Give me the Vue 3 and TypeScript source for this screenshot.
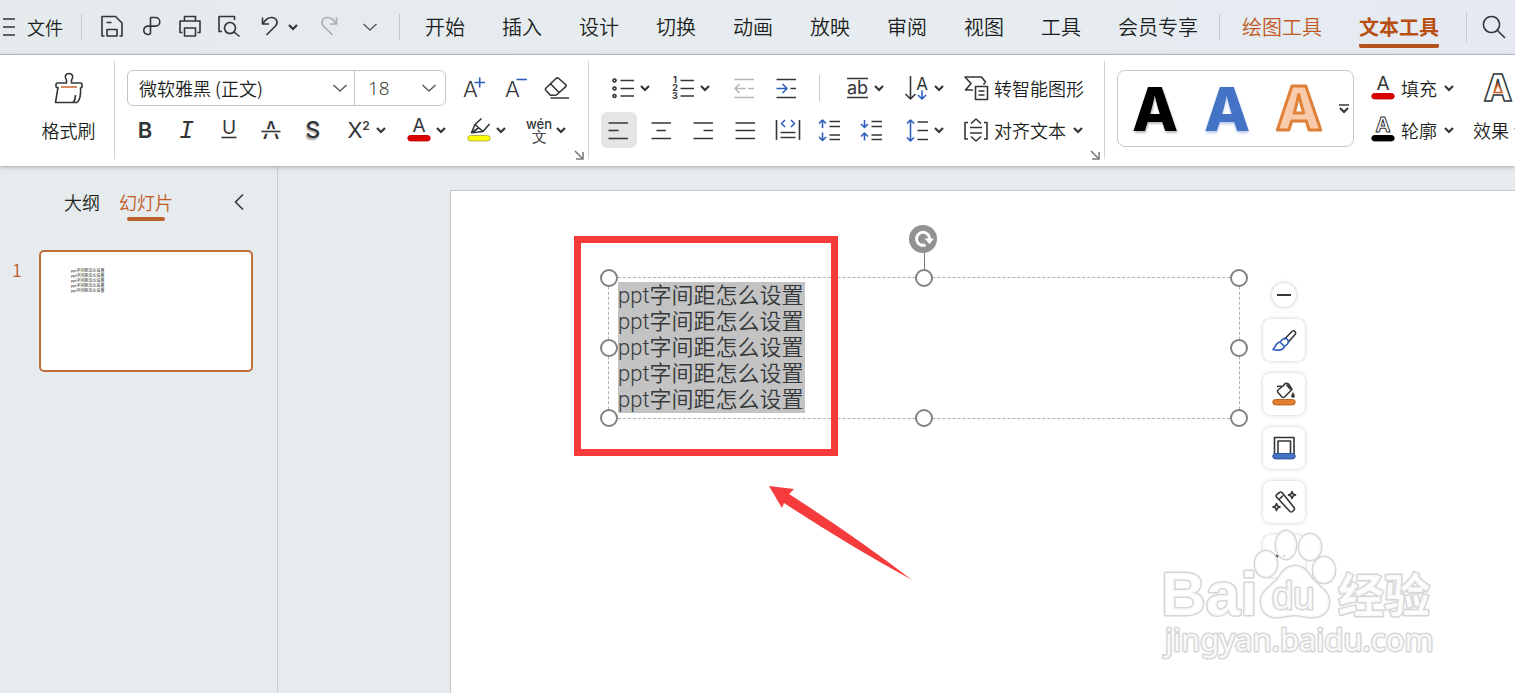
<script setup lang="ts">
import { h, ref, type FunctionalComponent } from 'vue'

interface Part {
  d?: string
  c?: string
  fill?: string
  w?: number
  t?: string
  x?: number
  y?: number
  s?: number
  weight?: number
  italic?: boolean
  font?: string
}

const INK = '#333638'
const BLUE = '#2f5fbd'
const SANS = 'Inter, "Open Sans", sans-serif'
const A_BAR = 'M5.5 19.5h17a2.7 2.7 0 0 1 0 5.4h-17a2.7 2.7 0 0 1 0-5.4z'

const icons: Record<string, Part[]> = {
  save: [{ d: 'M6.500 23H4V3.500H17.500L24 10V23H21.500M9 23V16.500H19V23ZM8.500 9.500H13.500' }],
  link: [{ d: 'M13.500 15V4.500H18.500a4.300 4.300 0 0 1 0 8.600H11a4.200 4.200 0 1 0 2.500 7.500V15' }],
  print: [{ d: 'M8.500 8V3.500H19.500V8M6.500 19.500H4V8H24V19.500H21.500M8.500 15H19.500V23H8.500Z' }],
  preview: [{ d: 'M7 18.500H4V3.500H19.500V7M15 9.500a5.500 5.500 0 1 0 .01 0zM19 19L24.500 23.500' }],
  undo: [{ d: 'M8.500 4.500V11H15M9 10.500C11.500 6.500 14 4.500 17.500 4.500c5.500 0 7 5.500 4 8.500L12.500 22' }],
  redo: [{ d: 'M19.500 4.500V11H13M19 10.500C16.500 6.500 14 4.500 10.500 4.500c-5.500 0-7 5.500-4 8.500L15.500 22', c: '#a9adb0' }],
  search: [{ d: 'M11.500 3.500a8 8 0 1 0 .01 0zM17.500 17.500L25 25' }],
  grow: [{ t: 'A', x: 10.5, y: 22.5, s: 22, weight: 300 }, { d: 'M14.500 8.500H25M19.700 3.500V13.500', c: BLUE }],
  shrink: [{ t: 'A', x: 10.5, y: 22.5, s: 22, weight: 300 }, { d: 'M14.500 5.500H25', c: BLUE }],
  eraser: [{ d: 'M2 14L12 4.500a2 2 0 0 1 2.800 0L21.500 10.500a1.500 1.500 0 0 1 0 2.400L13 20.500a3 3 0 0 1-2 .8H6.500L2 16.500a1.700 1.700 0 0 1 0-2.500zM6.500 9.800L15 18.500M6.500 24H25' }],
  bold: [{ t: 'B', x: 14, y: 21.5, s: 22, weight: 600 }],
  italic: [{ t: 'I', x: 13.5, y: 21.5, s: 25, italic: true, font: '"Liberation Mono", monospace' }],
  underline: [{ t: 'U', x: 14, y: 18, s: 19 }, { d: 'M6.500 21.500H21.500' }],
  strike: [{ t: 'Λ', x: 14, y: 22.5, s: 24 }, { d: 'M4 15.500H24', c: '#fff', w: 4.5 }, { d: 'M4.500 15.500H23.500' }],
  shadow: [{ t: 'S', x: 13, y: 24, s: 24, weight: 500, c: '#bcbcbc' }, { t: 'S', x: 14, y: 22, s: 23, weight: 500 }],
  script: [{ t: 'X', x: 10, y: 22, s: 22 }, { t: '2', x: 21, y: 14, s: 12, weight: 600 }],
  fontColor: [{ t: 'A', x: 14, y: 16, s: 19 }, { d: A_BAR, fill: '#dd0000', c: '#c80000', w: 1 }],
  highlight: [
    { d: 'M16.500 2.500L10 8.500L6.500 16.800L18 15.500L24.500 8M6.500 16.800L14 11.500M10 8.500L18 15.500' },
    { d: A_BAR, fill: '#ffff00', c: '#b5b548', w: 1 },
  ],
  pinyin: [{ t: 'wén', x: 14, y: 13, s: 13, weight: 500 }, { t: '文', x: 14, y: 26, s: 15, weight: 500 }],
  bullets: [{ d: 'M11.500 6.500H25M11.500 14.500H25M11.500 22H25' }, { d: 'M5.500 5a1.500 1.500 0 1 0 .01 0zM5.500 13a1.500 1.500 0 1 0 .01 0zM5.500 20.500a1.500 1.500 0 1 0 .01 0z' }],
  numbers: [
    { d: 'M11.500 6.500H25M11.500 14.500H25M11.500 22H25' },
    { t: '1', x: 6, y: 9, s: 9, weight: 700 }, { t: '2', x: 6, y: 17, s: 9, weight: 700 }, { t: '3', x: 6, y: 25, s: 9, weight: 700 },
  ],
  outdent: [{ d: 'M4.500 5.500H24M4.500 23.500H24M18 14.500H24M5 14.500H15.500M9.500 10L5 14.500L9.500 19', c: '#b4b6b8' }],
  indent: [{ d: 'M4.500 5.500H24M4.500 23.500H24M18.500 14.500H24' }, { d: 'M4.500 14.500H15M10.500 10L15 14.500L10.500 19', c: BLUE }],
  left: [{ d: 'M3.500 7H23M3.500 14.500H13.500M3.500 22.500H23' }],
  center: [{ d: 'M4.500 7H24M9.500 14.500H19M4.500 22.500H24' }],
  right: [{ d: 'M4.500 7H24M14.500 14.500H24M4.500 22.500H24' }],
  justify: [{ d: 'M4.500 7H24M4.500 14.500H24M4.500 22.500H24' }],
  spread: [{ d: 'M3.500 4V24M26.500 4V24M7.500 16.500H22.500M7.500 21.500H22.500' }, { d: 'M12 4L8.500 7.500L12 11M18 4L21.500 7.500L18 11', c: BLUE }],
  paraUp: [{ d: 'M14.500 5.500H25M14.500 10.500H25M14.500 19H25M14.500 23.500H25' }, { d: 'M7.500 12V4M4 7.500L7.500 4L11 7.500M7.500 16.500V24.500M4 21L7.500 24.500L11 21', c: BLUE }],
  paraDown: [{ d: 'M14.500 5.500H25M14.500 10.500H25M14.500 19H25M14.500 23.500H25' }, { d: 'M7.500 4V11.500M4 8L7.500 11.500L11 8M7.500 24.500V17M4 20.500L7.500 17L11 20.500', c: BLUE }],
  lineGap: [{ d: 'M14.500 6H25M14.500 14.500H25M14.500 23.500H25' }, { d: 'M7.500 4V25M4 7.500L7.500 4L11 7.500M4 21.500L7.500 25L11 21.500', c: BLUE }],
  ab: [{ t: 'ab', x: 14.5, y: 19.5, s: 18 }, { d: 'M4 4.500H25M4 23.500H25' }],
  sort: [{ d: 'M7.500 2V25M2.500 20L7.500 25L12.500 20' }, { t: 'A', x: 19, y: 15.500, s: 17 }, { d: 'M19 16.500V25M15 21L19 25L23 21', c: BLUE }],
  smart: [{ d: 'M11 16H3.500L9 9.500L3 3H19.500L23.500 8L21.500 10.500M13.500 12.500H25.500V25.500H13.500ZM16.500 17H22.500M16.500 21H22.500' }],
  alignText: [{ d: 'M6 6.500H3V23H6M22 6.500H25V23H22M9 7.500L14 3L19 7.500M8 11.500H20M8 17H20M9 20.500L14 25L19 20.500' }],
  brush: [
    { d: 'M14 13.500L22 5.500a2 2 0 0 1 3 3L18 16.500' },
    { d: 'M12.500 13.500a2.800 2.800 0 0 1 5 4.500l-3 2.500-4.500-4.500zM10 16C5 17 6 21 3 23.500c5 1 10.500.5 11.500-3', c: BLUE },
  ],
  bucket: [
    { d: 'M7 6.500L13.500 6a3 3 0 0 1 5-2L22 9.500 14.500 17a2 2 0 0 1-2.500 0L8 12.500a2 2 0 0 1 0-2.500l5-4M20.500 9.500l-4-5' },
    { d: 'M23 12.500c2 3 2 5 0 5s-2-2 0-5z', fill: INK, w: 0.5 },
    { d: A_BAR, fill: '#e08030', c: '#b9641c', w: 1 },
  ],
  frame: [
    { d: 'M4.500 20.500V3.500H24V20.500M8 20.500V7H20.500V20.500' },
    { d: A_BAR, fill: '#4472c4', c: '#2c55a0', w: 1 },
  ],
  wand: [{ d: 'M7.500 6l2-1.500a2 2 0 0 1 2.500 0L24 19.500a2 2 0 0 1 0 2.500l-1.500 1.500a2 2 0 0 1-2.500 0L6.500 9a2 2 0 0 1 1-3zM9 11.500l4-4M22 3.500l1 2.500 2.500 1-2.500 1-1 2.500-1-2.500-2.500-1 2.500-1zM6.500 15.500l1 2.500 2.500 1-2.500 1-1 2.500-1-2.500-2.500-1 2.500-1z' }],
}

const Icon: FunctionalComponent<{ name: string }> = (props) =>
  h(
    'svg',
    { width: 28, height: 28, viewBox: '0 0 28 28', fill: 'none', overflow: 'visible', 'aria-hidden': 'true' },
    icons[props.name].map((p) =>
      p.t
        ? h('text', {
            x: p.x, y: p.y, 'font-size': p.s, 'font-weight': p.weight ?? 400, fill: p.c ?? INK,
            'text-anchor': 'middle', 'font-family': p.font ?? SANS, 'font-style': p.italic ? 'italic' : 'normal',
          }, p.t)
        : h('path', {
            d: p.d, stroke: p.c ?? INK, 'stroke-width': p.w ?? 1.6, fill: p.fill ?? 'none',
            'stroke-linejoin': 'round',
          }),
    ),
  )
Icon.props = ['name']

const Caret: FunctionalComponent = () =>
  h('svg', { width: 12, height: 12, viewBox: '0 0 12 12', fill: 'none', 'aria-hidden': 'true' }, [
    h('path', { d: 'M2 4L6 8L10 4', stroke: INK, 'stroke-width': 2.2 }),
  ])

const Chevron: FunctionalComponent = () =>
  h('svg', { width: 16, height: 16, viewBox: '0 0 16 16', fill: 'none', 'aria-hidden': 'true' }, [
    h('path', { d: 'M1.500 5L8 11L14.500 5', stroke: '#5b5f62', 'stroke-width': 1.5 }),
  ])

const quick = [
  { id: 'save', label: '保存' },
  { id: 'link', label: '链接' },
  { id: 'print', label: '打印' },
  { id: 'preview', label: '打印预览' },
]
const tabs = ['开始', '插入', '设计', '切换', '动画', '放映', '审阅', '视图', '工具', '会员专享']
const styleButtons = [
  { id: 'bold', label: '加粗' },
  { id: 'italic', label: '倾斜' },
  { id: 'underline', label: '下划线' },
  { id: 'strike', label: '删除线' },
  { id: 'shadow', label: '阴影' },
]
const styleMenus = [
  { id: 'script', label: '上标' },
  { id: 'fontColor', label: '字体颜色' },
  { id: 'highlight', label: '突出显示' },
  { id: 'pinyin', label: '拼音' },
]
const alignButtons = [
  { id: 'left', label: '左对齐' },
  { id: 'center', label: '居中' },
  { id: 'right', label: '右对齐' },
  { id: 'justify', label: '两端对齐' },
  { id: 'spread', label: '分散对齐' },
  { id: 'paraUp', label: '增大段落间距' },
  { id: 'paraDown', label: '减小段落间距' },
]
const floatTools = [
  { id: 'brush', label: '样式' },
  { id: 'bucket', label: '填充' },
  { id: 'frame', label: '轮廓' },
  { id: 'wand', label: '美化' },
]
const handles = ['nw', 'n', 'ne', 'w', 'e', 'sw', 's', 'se']
const lines = Array.from({ length: 5 }, () => 'ppt字间距怎么设置')

const font = ref('微软雅黑 (正文)')
const size = ref('18')
const align = ref('left')
</script>

<template>
  <div class="app">
    <header class="menubar">
      <button class="file">
        <svg width="12" height="18" viewBox="0 0 12 18" aria-hidden="true">
          <path d="M0 1H12M0 9H12M0 17H12" stroke="#333638" stroke-width="1.6" />
        </svg>
        <span>文件</span>
      </button>
      <i class="sep"></i>
      <div class="quick">
        <button v-for="q in quick" :key="q.id" :aria-label="q.label"><Icon :name="q.id" /></button>
        <button class="undo" aria-label="撤销"><Icon name="undo" /></button>
        <button class="caret" aria-label="撤销列表"><Caret /></button>
        <button class="redo" aria-label="恢复"><Icon name="redo" /></button>
        <button aria-label="更多"><Chevron /></button>
      </div>
      <i class="sep"></i>
      <nav class="tabs">
        <a v-for="t in tabs" :key="t" href="#">{{ t }}</a>
      </nav>
      <i class="sep"></i>
      <nav class="tabs context">
        <a href="#">绘图工具</a>
        <a href="#" class="active">文本工具</a>
      </nav>
      <i class="sep last"></i>
      <button class="search" aria-label="搜索"><Icon name="search" /></button>
    </header>

    <section class="ribbon">
      <div class="group painter">
        <button>
          <svg width="36" height="36" viewBox="0 0 36 36" fill="none" stroke="#333638" stroke-width="1.6" stroke-linejoin="round" aria-hidden="true">
            <path d="M5 17.500V14.500a1.500 1.500 0 0 1 1.500-1.500H15.500V10C13.500 8 13.800 3.500 18 3.500s4.500 4.500 2.500 6.500V13h9a1.500 1.500 0 0 1 1.500 1.500V17.500H29.500M5 17.500H7L4.500 32.500H26C29 30 30 24 29.500 17.500M24.500 25c0 3-1 6-2.500 7.500" />
            <path d="M10 17H26" stroke="#c8703a" />
          </svg>
          <span>格式刷</span>
        </button>
      </div>

      <div class="group fonts">
        <div class="row">
          <div class="combo">
            <label class="pick family">
              <select v-model="font" aria-label="字体"><option>微软雅黑 (正文)</option></select>
              <Chevron />
            </label>
            <label class="pick size">
              <select v-model="size" aria-label="字号"><option>18</option></select>
              <Chevron />
            </label>
          </div>
          <div class="tight">
            <button class="tool" aria-label="增大字号"><Icon name="grow" /></button>
            <button class="tool" aria-label="减小字号"><Icon name="shrink" /></button>
            <button class="tool" aria-label="清除格式"><Icon name="eraser" /></button>
          </div>
        </div>
        <div class="row">
          <div class="tight">
            <button v-for="b in styleButtons" :key="b.id" class="tool" :aria-label="b.label"><Icon :name="b.id" /></button>
          </div>
          <div class="menus">
            <button v-for="m in styleMenus" :key="m.id" class="split" :aria-label="m.label"><Icon :name="m.id" /><Caret /></button>
          </div>
        </div>
        <button class="launcher" aria-label="字体设置">
          <svg width="10" height="10" viewBox="0 0 10 10" fill="none" stroke="#77797b" stroke-width="1.5"><path d="M1 1L8 8M9 2V9H2" /></svg>
        </button>
      </div>

      <div class="group paragraph">
        <div class="row lists">
          <div class="menus">
            <button class="split" aria-label="项目符号"><Icon name="bullets" /><Caret /></button>
            <button class="split" aria-label="编号"><Icon name="numbers" /><Caret /></button>
          </div>
          <div class="tight">
            <button class="tool" aria-label="减少缩进"><Icon name="outdent" /></button>
            <button class="tool" aria-label="增加缩进"><Icon name="indent" /></button>
          </div>
          <i class="sep"></i>
          <div class="menus">
            <button class="split" aria-label="字符间距"><Icon name="ab" /><Caret /></button>
            <button class="split" aria-label="文字方向"><Icon name="sort" /><Caret /></button>
          </div>
          <button class="wide"><Icon name="smart" /><span>转智能图形</span></button>
        </div>
        <div class="row">
          <div class="tight">
            <button
              v-for="a in alignButtons" :key="a.id" class="tool" :class="{ on: align === a.id }"
              :aria-label="a.label" @click="align = a.id"
            ><Icon :name="a.id" /></button>
          </div>
          <button class="split gap" aria-label="行距"><Icon name="lineGap" /><Caret /></button>
          <button class="wide"><Icon name="alignText" /><span>对齐文本</span><Caret /></button>
        </div>
        <button class="launcher" aria-label="段落设置">
          <svg width="10" height="10" viewBox="0 0 10 10" fill="none" stroke="#77797b" stroke-width="1.5"><path d="M1 1L8 8M9 2V9H2" /></svg>
        </button>
      </div>

      <div class="group art">
        <div class="gallery">
          <button class="sample black">A</button>
          <button class="sample blue">A</button>
          <button class="sample orange">
            <svg width="60" height="60" viewBox="0 0 60 60"><text x="30" y="51" text-anchor="middle">A</text></svg>
          </button>
          <button class="more" aria-label="更多样式">
            <svg width="12" height="10" viewBox="0 0 12 10" fill="none" stroke="#333638"><path d="M1 1H11" stroke-width="1.5" /><path d="M2 4L6 8L10 4" stroke-width="2" /></svg>
          </button>
        </div>
        <div class="paint">
          <button class="wide"><Icon name="fontColor" /><span>填充</span><Caret /></button>
          <button class="wide">
            <svg width="28" height="28" viewBox="0 0 28 28" fill="none" aria-hidden="true">
              <text x="14" y="16" class="outline-letter">A</text>
              <path d="M5.500 19.500h17a2.700 2.700 0 0 1 0 5.400h-17a2.700 2.700 0 0 1 0-5.400z" fill="#000" stroke="#000" />
            </svg>
            <span>轮廓</span><Caret />
          </button>
        </div>
        <button class="effects">
          <svg width="36" height="36" viewBox="0 0 36 36" aria-hidden="true">
            <text x="18" y="31" class="effect-letter">A</text>
            <path d="M18 14L22 22.500H14Z" fill="#fff" stroke="#d2642a" stroke-width="1.600" />
          </svg>
          <span class="effect-label"><span>效果</span><Caret /></span>
        </button>
      </div>
    </section>

    <main class="workspace">
      <aside class="panel">
        <div class="panel-head">
          <button class="ptab">大纲</button>
          <button class="ptab active">幻灯片</button>
          <button class="collapse" aria-label="收起">
            <svg width="12" height="18" viewBox="0 0 12 18" fill="none" stroke="#333638" stroke-width="1.600"><path d="M10 1.500L2.500 9L10 16.500" /></svg>
          </button>
        </div>
        <div class="slide-item">
          <span class="num">1</span>
          <button class="thumb" aria-label="幻灯片 1">
            <span v-for="(l, i) in lines" :key="i">{{ l }}</span>
          </button>
        </div>
      </aside>

      <div class="canvas">
        <div class="slide">
          <div class="textbox">
            <div class="selected">
              <p v-for="(l, i) in lines" :key="i">{{ l }}</p>
            </div>
            <i class="stem"></i>
            <i v-for="k in handles" :key="k" class="handle" :class="k"></i>
            <button class="rotate" aria-label="旋转">
              <svg width="30" height="30" viewBox="0 0 30 30" fill="none">
                <circle cx="15" cy="15" r="14" fill="#929292" />
                <path d="M17.500 20.800A6.500 6.500 0 1 1 21.500 15.500" stroke="#fff" stroke-width="3" />
                <path d="M16.500 14.500H26L21.500 20Z" fill="#fff" />
              </svg>
            </button>
          </div>

          <div class="mark"></div>
          <svg class="arrow" width="146" height="98" viewBox="0 0 146 98" aria-hidden="true">
            <path d="M1 1L26 4L21 9Q88 52 144 95Q80 60 16 18L14 23Z" fill="#f53b3b" />
          </svg>

          <div class="floatbar">
            <button class="minus" aria-label="收起"><svg width="14" height="2" viewBox="0 0 14 2"><path d="M0 1H14" stroke="#333638" stroke-width="2" /></svg></button>
            <button v-for="f in floatTools" :key="f.id" class="ftool" :aria-label="f.label"><Icon :name="f.id" /></button>
            <button class="ftool" aria-label="更多">
              <svg width="28" height="28" viewBox="0 0 28 28" fill="#222"><circle cx="7" cy="14" r="1.500" /><circle cx="14" cy="14" r="1.500" /><circle cx="21" cy="14" r="1.500" /></svg>
            </button>
          </div>

          <svg class="watermark" width="300" height="150" viewBox="0 0 300 150">
            <g class="wm">
              <text x="11" y="95" font-size="62" class="brand">Bai</text>
              <ellipse cx="136" cy="25" rx="10" ry="14" />
              <ellipse cx="160" cy="27" rx="11" ry="13" />
              <ellipse cx="116" cy="44" rx="11" ry="13" />
              <ellipse cx="174" cy="50" rx="11" ry="13" />
              <path d="M145 46C154 46 158 53 163 60C170 67 179 72 179 82C179 92 172 97 163 97C156 98 151 95 145 95C138 95 131 98 123 97C114 95 110 88 111 80C112 71 121 66 127 60C132 53 136 46 145 46Z" />
              <text x="122" y="89" font-size="38" class="du">du</text>
              <text x="188" y="92" font-size="46" class="brand">经验</text>
              <text x="15" y="131" font-size="31" class="url">jingyan.baidu.com</text>
            </g>
          </svg>
        </div>
      </div>
    </main>
  </div>
</template>

<style>
html,
body {
  margin: 0;
  background: #e6ebee;
}
</style>

<style scoped>
.app {
  display: flex;
  flex-direction: column;
  height: 100vh;
  overflow: hidden;
  background: #e6ebee;
  color: #1c1f21;
  font-family: 'Noto Sans CJK SC', sans-serif;
  font-size: 18px;
  font-weight: 350;
  line-height: 24px;
}
button {
  display: flex;
  align-items: center;
  justify-content: center;
  flex: none;
  margin: 0;
  padding: 0;
  border: 0;
  background: none;
  color: inherit;
  font: inherit;
}
a {
  color: inherit;
  text-decoration: none;
}
svg {
  display: block;
  flex: none;
  overflow: visible;
}
.sep {
  flex: none;
  width: 1px;
  height: 26px;
  background: #c6cacd;
}

.menubar {
  display: flex;
  align-items: center;
  flex: none;
  height: 54px;
  padding: 0 7px 0 3px;
  border-bottom: 1px solid #bcc0c3;
  background: linear-gradient(90deg, #e5eaed, #e7ecf0 60%, #e5eaf2);
  white-space: nowrap;
}
.file {
  gap: 12px;
  margin-right: 18px;
}
.quick {
  display: flex;
  align-items: center;
  margin: 0 10px;
}
.quick button {
  width: 39px;
  height: 36px;
}
.quick .caret {
  width: 12px;
}
.quick .redo {
  margin-left: 12px;
}
.tabs {
  display: flex;
  gap: 37px;
  margin: 0 21px 0 25px;
  font-size: 20px;
}
.tabs a {
  padding: 8px 0 5px;
  border-bottom: 4px solid transparent;
}
.tabs.context {
  margin: 0 0 0 22px;
  color: #c05a22;
}
.tabs .active {
  border-bottom: 4px solid #b5521c;
  border-radius: 2px;
  color: #b84f12;
  font-weight: 700;
}
.sep.last {
  margin-left: auto;
  height: 30px;
}
.search {
  width: 28px;
  height: 36px;
  margin-left: 13px;
}

.ribbon {
  position: relative;
  z-index: 1;
  display: flex;
  flex: none;
  height: 111px;
  background: #fff;
  box-shadow: 0 1px 4px rgba(90, 100, 110, 0.5);
  white-space: nowrap;
}
.group {
  position: relative;
  display: flex;
  flex-direction: column;
  flex: none;
  gap: 6px;
  padding-top: 15px;
}
.group:not(:last-child)::after {
  content: '';
  position: absolute;
  top: 6px;
  right: 0;
  width: 1px;
  height: 98px;
  background: #d2d5d7;
}
.painter {
  align-items: center;
  width: 93px;
  padding-left: 22px;
}
.painter button {
  flex-direction: column;
  gap: 12px;
}
.fonts {
  padding-left: 12px;
  padding-right: 13px;
}
.row {
  display: flex;
  align-items: center;
  height: 36px;
}
.tight {
  display: flex;
  gap: 6px;
}
.menus {
  display: flex;
  gap: 12px;
}
.fonts .menus {
  margin-left: 9px;
}
.combo {
  display: flex;
  margin-right: 10px;
  border: 1px solid #c3c6c8;
  border-radius: 6px;
}
.pick {
  display: flex;
  align-items: center;
  box-sizing: border-box;
  height: 34px;
  padding-right: 6px;
}
.pick.family {
  width: 226px;
}
.pick.size {
  width: 91px;
  padding-right: 8px;
  border-left: 1px solid #c3c6c8;
}
select {
  flex: 1;
  min-width: 0;
  height: 34px;
  padding: 0 0 0 11px;
  border: 0;
  appearance: none;
  background: none;
  color: inherit;
  font: inherit;
}
.size select {
  padding-left: 13px;
  font-family: 'Open Sans', sans-serif;
  font-size: 19px;
}
.tool {
  width: 36px;
  height: 36px;
  border-radius: 6px;
}
.tool.on {
  background: #e4e5e6;
}
.split {
  width: 48px;
  height: 36px;
  gap: 2px;
  padding-left: 4px;
  box-sizing: border-box;
}
.launcher {
  position: absolute;
  right: 4px;
  bottom: 5px;
  width: 12px;
  height: 12px;
}
.paragraph {
  padding-left: 12px;
  padding-right: 21px;
}
.lists {
  padding-left: 3px;
}
.lists .tight {
  margin: 0 15px 0 14px;
}
.lists .sep {
  margin-right: 18px;
}
.split.gap {
  margin-left: 9px;
}
.wide {
  gap: 4px;
}
.paragraph .wide {
  margin-left: 16px;
}
.wide svg:last-child {
  margin-left: 2px;
}
.art {
  flex-direction: row;
  gap: 0;
  flex: 1;
  min-width: 0;
  overflow: hidden;
  padding-left: 12px;
}
.gallery {
  display: flex;
  flex: none;
  height: 75px;
  padding: 0 0 0 1px;
  border: 1px solid #c6c8ca;
  border-radius: 8px;
}
.sample {
  width: 72px;
  font-family: Inter, 'Open Sans', sans-serif;
  font-size: 60px;
  font-weight: 800;
  line-height: 74px;
}
.black {
  color: #000;
  text-shadow: 1px 2px 2px #bbb;
}
.blue {
  color: #4472c4;
  text-shadow: 0 2px 3px #b9c8ea;
}
.orange text {
  fill: #f8cbad;
  stroke: #e0813a;
  stroke-width: 3px;
  stroke-linejoin: round;
}
.more {
  width: 18px;
}
.paint {
  display: flex;
  flex-direction: column;
  flex: none;
  gap: 6px;
  margin-left: 15px;
}
.paint .wide {
  height: 36px;
}
.outline-letter {
  font-family: Inter, sans-serif;
  font-size: 20px;
  font-weight: 700;
  text-anchor: middle;
  fill: #fff;
  stroke: #333638;
  stroke-width: 1px;
}
.effects {
  flex-direction: column;
  align-self: flex-start;
  align-items: flex-start;
  gap: 12px;
  margin-left: 18px;
}
.effects > svg {
  margin-left: 7px;
}
.effect-label {
  display: flex;
  align-items: center;
  gap: 4px;
}
.effect-letter {
  font-family: Inter, sans-serif;
  font-size: 37px;
  font-weight: 800;
  text-anchor: middle;
  fill: #fff;
  stroke: #333638;
  stroke-width: 1.500px;
}

.workspace {
  display: flex;
  flex: 1;
  min-height: 0;
}
.panel {
  flex: none;
  box-sizing: border-box;
  width: 278px;
  padding-top: 24px;
  border-right: 1px solid #c9cdd0;
}
.panel-head {
  display: flex;
  align-items: flex-start;
  padding: 0 32px 0 64px;
}
.ptab {
  position: relative;
  margin-right: 19px;
}
.ptab.active {
  color: #c05a22;
}
.ptab.active::after {
  content: '';
  position: absolute;
  left: 8px;
  right: 8px;
  bottom: -7px;
  height: 4px;
  border-radius: 2px;
  background: #b9602b;
}
.collapse {
  height: 24px;
  margin-left: auto;
}
.slide-item {
  display: flex;
  margin-top: 36px;
}
.num {
  width: 27px;
  padding: 7px 0 0 12px;
  color: #b9602b;
}
.thumb {
  flex-direction: column;
  align-items: flex-start;
  justify-content: flex-start;
  box-sizing: border-box;
  width: 214px;
  height: 122px;
  padding: 16px 30px;
  border: 2px solid #c06c3c;
  border-radius: 5px;
  background: #fff;
  font-family: 'Liberation Sans', 'Noto Sans CJK SC', sans-serif;
  font-size: 4px;
  font-weight: 400;
  line-height: 5px;
  white-space: nowrap;
}
.canvas {
  display: flex;
  flex: 1;
  min-width: 0;
  padding: 24px 0 0 172px;
}
.slide {
  position: relative;
  flex: 1;
  min-width: 0;
  overflow: hidden;
  border: 1px solid #c4c8ca;
  border-width: 1px 0 0 1px;
  background: #fff;
}
.textbox {
  position: absolute;
  left: 157px;
  top: 86px;
  box-sizing: border-box;
  width: 632px;
  padding: 4px 9px 5px;
  border: 1px dashed #b0b0b0;
}
.selected {
  width: 187px;
  padding-top: 1px;
  background: #c3c3c3;
  color: #36383a;
  font-family: Roboto, 'Noto Sans CJK SC', sans-serif;
  font-size: 22px;
  line-height: 26px;
}
.selected p {
  margin: 0;
  white-space: nowrap;
}
.handle {
  position: absolute;
  box-sizing: border-box;
  width: 18px;
  height: 18px;
  margin: -9px;
  border: 2px solid #828282;
  border-radius: 50%;
  background: #fff;
}
.nw, .w, .sw { left: 0; }
.n, .s { left: 50%; }
.ne, .e, .se { left: 100%; }
.nw, .n, .ne { top: 0; }
.w, .e { top: 50%; }
.sw, .s, .se { top: 100%; }
.stem {
  position: absolute;
  left: 50%;
  top: -28px;
  width: 1px;
  height: 28px;
  background: #777;
}
.rotate {
  position: absolute;
  left: 50%;
  top: -54px;
  margin-left: -16px;
}
.mark {
  position: absolute;
  left: 123px;
  top: 45px;
  box-sizing: border-box;
  width: 264px;
  height: 220px;
  border: 7px solid #f73a3a;
}
.arrow {
  position: absolute;
  left: 317px;
  top: 294px;
}
.floatbar {
  position: absolute;
  left: 812px;
  top: 92px;
  display: flex;
  flex-direction: column;
  align-items: center;
  gap: 12px;
}
.minus {
  width: 24px;
  height: 24px;
  border-radius: 50%;
  background: #fff;
  box-shadow: 0 0 4px rgba(0, 0, 0, 0.25);
}
.ftool {
  width: 42px;
  height: 42px;
  border-radius: 8px;
  background: #fff;
  box-shadow: 0 0 4px rgba(0, 0, 0, 0.2);
}
.watermark {
  position: absolute;
  left: 699px;
  top: 329px;
}
.wm {
  fill: #fff;
  fill-opacity: 0.85;
  stroke: #d6d6d6;
  stroke-width: 3px;
  stroke-linejoin: round;
  paint-order: stroke;
}
.brand {
  font-family: 'Liberation Sans', 'Noto Sans CJK SC', sans-serif;
  font-weight: 700;
}
.du {
  font-family: 'Liberation Sans', sans-serif;
  font-weight: 400;
}
.url {
  font-family: 'Noto Sans', sans-serif;
  font-weight: 400;
}
</style>
